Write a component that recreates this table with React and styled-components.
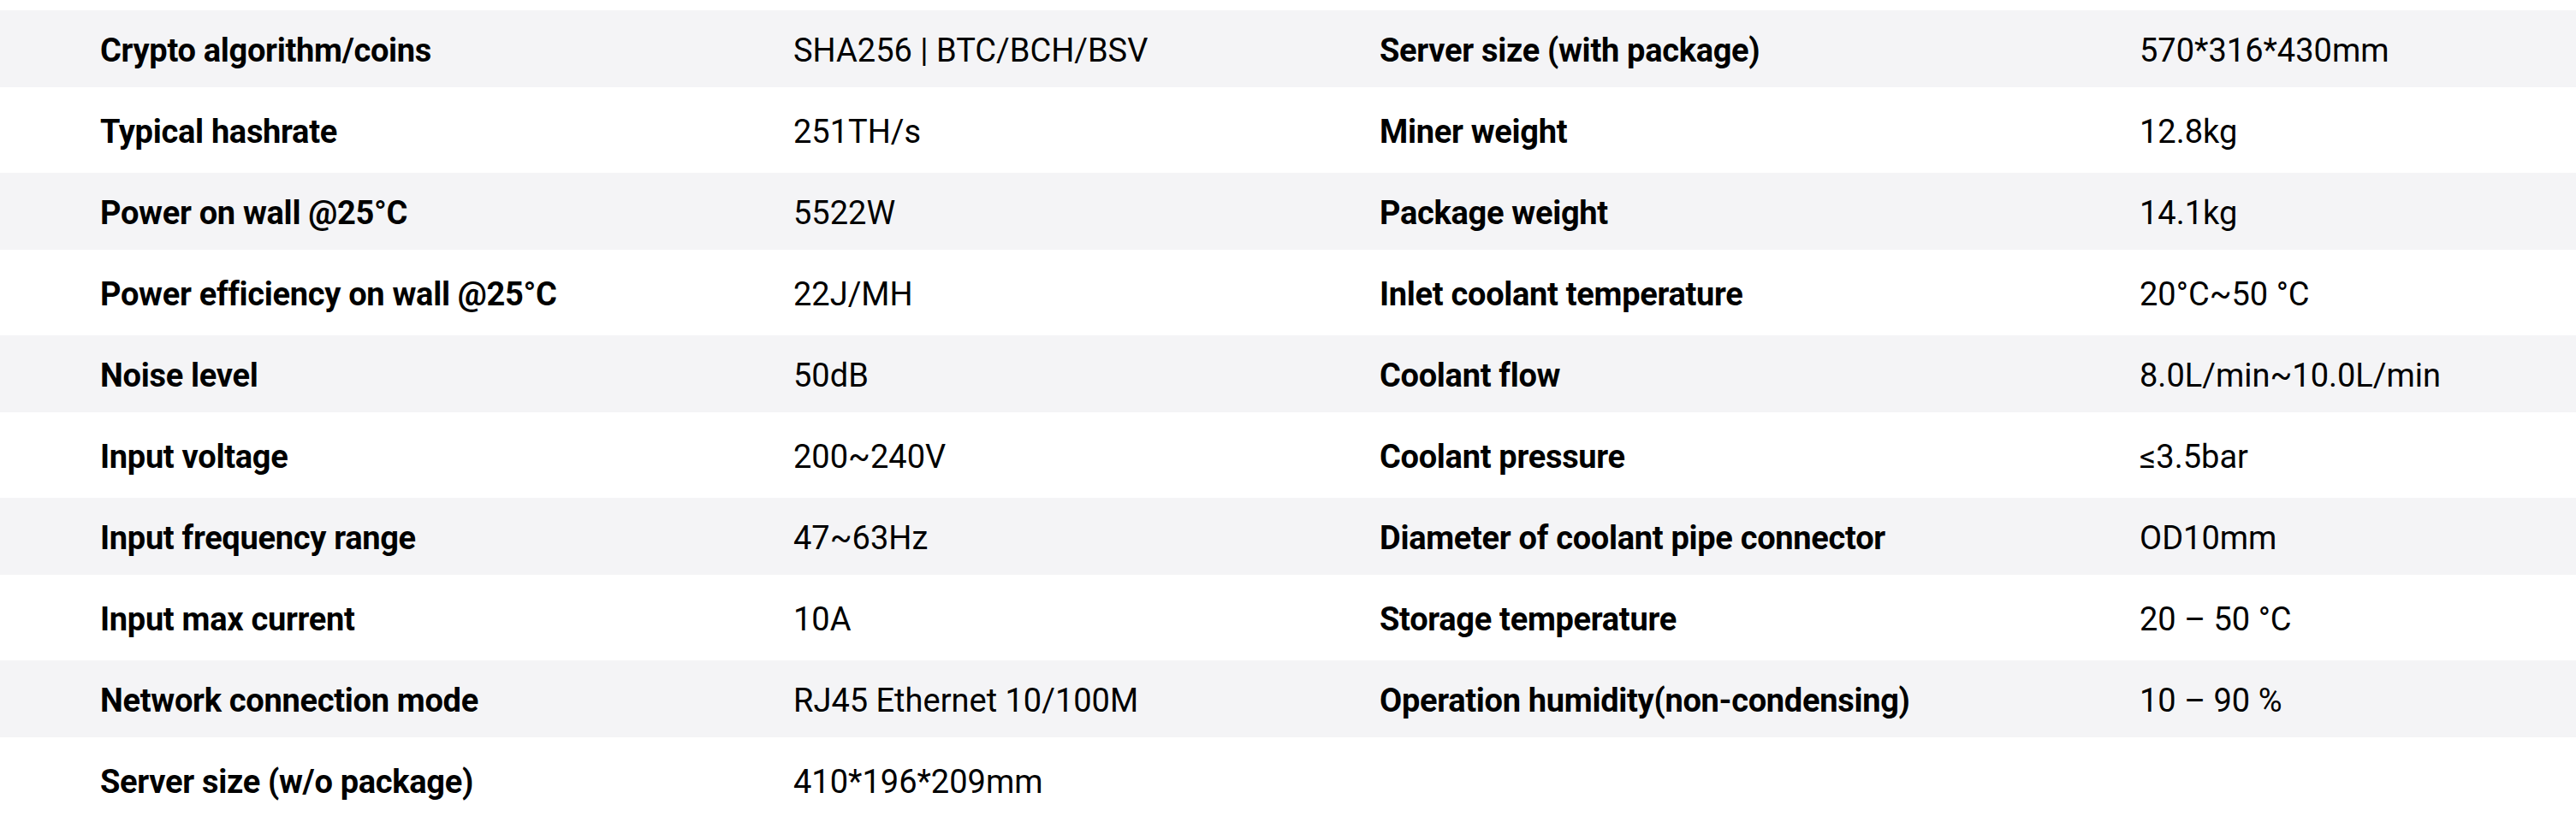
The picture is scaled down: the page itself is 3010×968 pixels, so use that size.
import React from "react";
import styled, { createGlobalStyle } from "styled-components";

const Global = createGlobalStyle`
  html, body { margin: 0; padding: 0; background: #ffffff; }
  body { font-family: Roboto, "Liberation Sans", Arial, sans-serif; color: #000; }
`;

const Table = styled.div`
  display: flex;
  flex-direction: column;
  padding-top: 12px;
  width: 3010px;
`;

const Row = styled.div`
  display: grid;
  grid-template-columns: 810px 685px 888px 1fr;
  align-items: center;
  padding-left: 117px;
  padding-top: 4px;
  box-sizing: border-box;
  height: ${(p) => (p.$shaded ? "90px" : "100px")};
  background: ${(p) => (p.$shaded ? "#f4f4f6" : "#ffffff")};
`;

const Label = styled.div`
  font-size: 38px;
  font-weight: 700;
  color: #000;
  letter-spacing: -0.3px;
  white-space: nowrap;
`;

const Value = styled.div`
  font-size: 38px;
  font-weight: 400;
  color: #000;
  white-space: nowrap;
`;

const rows = [
  ["Crypto algorithm/coins", "SHA256 | BTC/BCH/BSV", "Server size (with package)", "570*316*430mm"],
  ["Typical hashrate", "251TH/s", "Miner weight", "12.8kg"],
  ["Power on wall @25°C", "5522W", "Package weight", "14.1kg"],
  ["Power efficiency on wall @25°C", "22J/MH", "Inlet coolant temperature", "20°C~50 °C"],
  ["Noise level", "50dB", "Coolant flow", "8.0L/min~10.0L/min"],
  ["Input voltage", "200~240V", "Coolant pressure", "≤3.5bar"],
  ["Input frequency range", "47~63Hz", "Diameter of coolant pipe connector", "OD10mm"],
  ["Input max current", "10A", "Storage temperature", "20 – 50 °C"],
  ["Network connection mode", "RJ45 Ethernet 10/100M", "Operation humidity(non-condensing)", "10 – 90 %"],
  ["Server size (w/o package)", "410*196*209mm", "", ""],
];

export default function App() {
  return (
    <>
      <Global />
      <Table>
        {rows.map((r, i) => (
          <Row key={i} $shaded={i % 2 === 0}>
            <Label>{r[0]}</Label>
            <Value>{r[1]}</Value>
            <Label>{r[2]}</Label>
            <Value>{r[3]}</Value>
          </Row>
        ))}
      </Table>
    </>
  );
}
